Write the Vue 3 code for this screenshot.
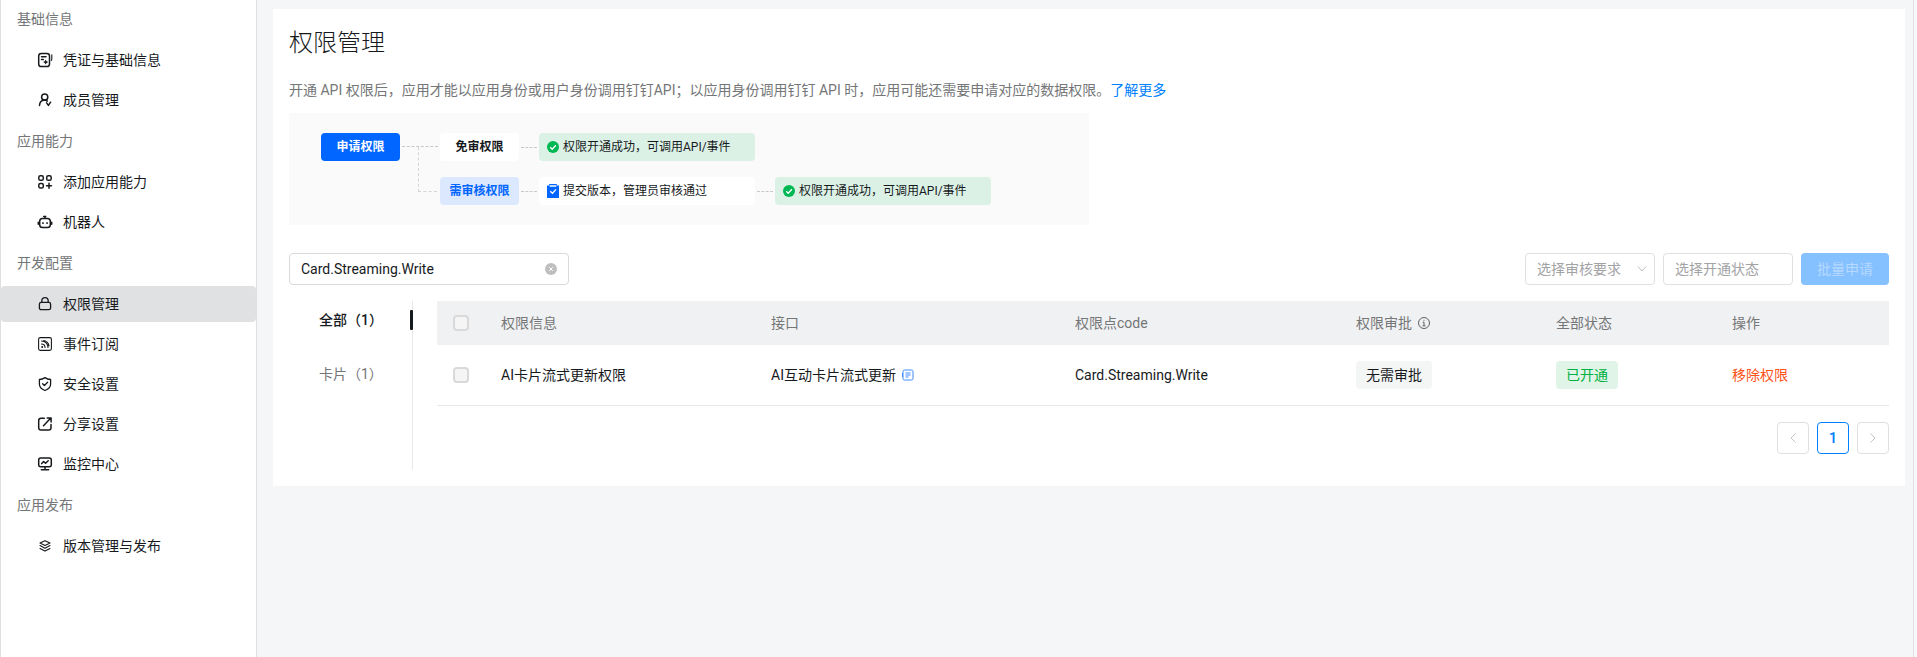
<script setup>
import { ref } from 'vue'

const groups = [
  {
    title: '基础信息',
    items: [
      { name: '凭证与基础信息', icon: 'credential' },
      { name: '成员管理', icon: 'member' }
    ]
  },
  {
    title: '应用能力',
    items: [
      { name: '添加应用能力', icon: 'apps' },
      { name: '机器人', icon: 'robot' }
    ]
  },
  {
    title: '开发配置',
    items: [
      { name: '权限管理', icon: 'lock' },
      { name: '事件订阅', icon: 'feed' },
      { name: '安全设置', icon: 'shield' },
      { name: '分享设置', icon: 'share' },
      { name: '监控中心', icon: 'monitor' }
    ]
  },
  {
    title: '应用发布',
    items: [{ name: '版本管理与发布', icon: 'layers' }]
  }
]

const current = ref('权限管理')
const keyword = ref('Card.Streaming.Write')
const tabs = ['全部（1）', '卡片（1）']
const activeTab = ref(tabs[0])
const rows = [
  { name: 'AI卡片流式更新权限', api: 'AI互动卡片流式更新', code: 'Card.Streaming.Write', approve: '无需审批', status: '已开通' }
]
</script>

<template>
  <div class="page">
    <nav class="sidebar" aria-label="应用菜单">
      <section v-for="group in groups" :key="group.title" class="group">
        <h2 class="group-title">{{ group.title }}</h2>
        <a
          v-for="item in group.items"
          :key="item.name"
          href="#"
          class="item"
          :class="{ active: item.name === current }"
          @click.prevent="current = item.name"
        >
          <svg class="icon" viewBox="0 0 16 16" aria-hidden="true">
            <g v-if="item.icon === 'credential'">
              <rect x="1.7" y="1.500" width="10.800" height="13" rx="2.600" />
              <path d="M4.500 4.800h4.500M4.500 7.500h1.800" />
              <path class="fine" d="M14.800 2.800v4c0 .7-.2 1.200-.5 1.700" />
              <path class="solid" d="M8.700 7.600l.9 1.700 1.700.800-1.700.800-.9 1.700-.9-1.700-1.700-.800 1.700-.800z" />
            </g>
            <g v-else-if="item.icon === 'member'">
              <circle cx="7.700" cy="5" r="3.100" />
              <path d="M2.500 13.500c.2-3 2-5.200 5-5.400 1.200 0 2 .3 2.800 1M9.600 10.900l1.800 2.500 2.200-3.200" />
            </g>
            <g v-else-if="item.icon === 'apps'">
              <rect x="1.800" y="1.800" width="4.500" height="4.500" rx="1.600" />
              <rect x="9.700" y="1.800" width="4.500" height="4.500" rx="1.600" />
              <rect x="1.800" y="9.500" width="4.500" height="4.500" rx="1.600" />
              <path d="M12 9.200v5M9.500 11.700h5" />
            </g>
            <g v-else-if="item.icon === 'robot'">
              <rect x="2.700" y="4.500" width="10.600" height="9" rx="2.800" />
              <path d="M1.300 8.200v2M14.700 8.200v2M8 4.300V2.300M6.700 2.600h2" />
              <path class="solid" d="M5.200 8.300h1.500v1.700H5.200zM9.300 8.300h1.500v1.700H9.300z" />
            </g>
            <g v-else-if="item.icon === 'lock'" class="medium">
              <rect x="2.400" y="6.400" width="11.200" height="7.300" rx="1.800" />
              <path d="M4.800 6.200V5c0-2 1.200-3.400 3.200-3.400s3.200 1.400 3.200 3.400v1.200" />
            </g>
            <g v-else-if="item.icon === 'feed'" class="thin">
              <rect x="1.600" y="1.600" width="12.800" height="12.800" rx="1.600" />
              <path d="M4.500 5c3.800 0 6.500 2.700 6.500 6.500M4.500 8c2 0 3.500 1.500 3.500 3.500M6.800 4.500c2.800.5 4.700 2.600 5.200 5.400" />
              <circle class="solid" cx="5.200" cy="11" r="1" />
            </g>
            <g v-else-if="item.icon === 'shield'" class="medium">
              <path d="M8 1.600c1.700 1.200 3.500 1.800 5.600 1.900v4.800c0 3-2.200 5-5.600 6.200-3.400-1.200-5.600-3.200-5.600-6.200V3.500C4.500 3.400 6.300 2.800 8 1.600z" />
              <path d="M5.600 7.700l1.800 1.800 3.200-3.200" />
            </g>
            <g v-else-if="item.icon === 'share'">
              <path d="M7.300 2.300H4C2.700 2.300 1.700 3.300 1.700 4.600v7.200c0 1.300 1 2.300 2.300 2.300h7.700c1.300 0 2.300-1 2.300-2.300V8.500M6.500 9.700l7.300-7.600M10.200 1.900h3.900v4" />
            </g>
            <g v-else-if="item.icon === 'monitor'">
              <rect x="1.700" y="2" width="12.600" height="8.800" rx="2" />
              <path d="M4.700 7.600l1.900-2 2 1.600 2.600-2.500M8 11v2.400M4.300 13.800h7.400" />
            </g>
            <g v-else class="thin">
              <path d="M8 2.700l5 2.300-5 2.500L3 5zM3 7.600l5 2.600 5-2.600M3 10.500l5 2.600 5-2.600" />
            </g>
          </svg>
          <span>{{ item.name }}</span>
        </a>
      </section>
    </nav>

    <main class="main">
      <section class="card">
        <h1 class="title">权限管理</h1>
        <p class="desc">
          开通 API 权限后，应用才能以应用身份或用户身份调用钉钉API；以应用身份调用钉钉 API 时，应用可能还需要申请对应的数据权限。<a href="#">了解更多</a>
        </p>

        <div class="flow">
          <span class="node primary">申请权限</span>
          <span class="link fork"></span>
          <div class="branches">
            <div class="branch">
              <span class="node plain">免审权限</span>
              <span class="link"></span>
              <span class="node wide success">
                <svg viewBox="0 0 12 12" aria-hidden="true"><circle cx="6" cy="6" r="6" fill="#00b853" /><path d="M3.200 6.200l2 2 3.700-3.900" /></svg>
                权限开通成功，可调用API/事件
              </span>
            </div>
            <div class="branch">
              <span class="node light">需审核权限</span>
              <span class="link"></span>
              <span class="node wide">
                <svg viewBox="0 0 12 14" class="clip" aria-hidden="true"><path class="board" d="M0 1.500h2.200V0h7.600v1.500H12V14H0z" /><path d="M2.700 2h6.600M3.300 7.300l2.200 2 3.500-3.900" /></svg>
                提交版本，管理员审核通过
              </span>
              <span class="link"></span>
              <span class="node wide success">
                <svg viewBox="0 0 12 12" aria-hidden="true"><circle cx="6" cy="6" r="6" fill="#00b853" /><path d="M3.200 6.200l2 2 3.700-3.900" /></svg>
                权限开通成功，可调用API/事件
              </span>
            </div>
          </div>
        </div>

        <div class="toolbar">
          <div class="search">
            <input v-model="keyword" type="text" aria-label="搜索权限" />
            <button type="button" class="clear" aria-label="清除" @click="keyword = ''">
              <svg viewBox="0 0 12 12" aria-hidden="true"><circle cx="6" cy="6" r="6" fill="#bfbfbf" /><path d="M4.200 4.200l3.600 3.600M7.800 4.200L4.200 7.800" stroke="#fff" /></svg>
            </button>
          </div>
          <div class="filters">
            <div class="select">
              <select aria-label="审核要求"><option>选择审核要求</option></select>
              <svg viewBox="0 0 10 6" aria-hidden="true"><path d="M1 .5l4 4.500 4-4.500" /></svg>
            </div>
            <div class="select">
              <select aria-label="开通状态"><option>选择开通状态</option></select>
            </div>
            <button type="button" class="apply" disabled>批量申请</button>
          </div>
        </div>

        <div class="content">
          <div class="tabs">
            <button
              v-for="tab in tabs"
              :key="tab"
              type="button"
              class="tab"
              :class="{ on: tab === activeTab }"
              @click="activeTab = tab"
            >{{ tab }}</button>
          </div>
          <div class="list">
            <table>
              <colgroup>
                <col class="c-check" /><col class="c-info" /><col class="c-api" /><col class="c-code" /><col class="c-approve" /><col class="c-status" /><col />
              </colgroup>
              <thead>
                <tr>
                  <th><input type="checkbox" disabled aria-label="全选" /></th>
                  <th>权限信息</th>
                  <th>接口</th>
                  <th>权限点code</th>
                  <th>
                    <span class="inline">权限审批
                      <svg class="info" viewBox="0 0 12 12" aria-hidden="true"><circle cx="6" cy="6" r="5.500" /><path d="M4.700 5.200H6v3.500M4.500 8.800h3M5.500 3.300h1" /></svg>
                    </span>
                  </th>
                  <th>全部状态</th>
                  <th>操作</th>
                </tr>
              </thead>
              <tbody>
                <tr v-for="row in rows" :key="row.code">
                  <td><input type="checkbox" disabled :aria-label="row.name" /></td>
                  <td>{{ row.name }}</td>
                  <td>
                    <span class="inline">{{ row.api }}
                      <svg class="doc" viewBox="0 0 12 12" aria-hidden="true"><rect x="1" y="1" width="10" height="10" rx="1.500" /><path d="M3.500 4h5M3.500 6h5M3.500 8h3M.5 4v4" /></svg>
                    </span>
                  </td>
                  <td>{{ row.code }}</td>
                  <td><span class="tag">{{ row.approve }}</span></td>
                  <td><span class="tag ok">{{ row.status }}</span></td>
                  <td><a href="#" class="remove">移除权限</a></td>
                </tr>
              </tbody>
            </table>
            <div class="pager">
              <button type="button" disabled aria-label="上一页"><svg viewBox="0 0 6 10" aria-hidden="true"><path d="M5.500.5L1 5l4.500 4.500" /></svg></button>
              <button type="button" class="num">1</button>
              <button type="button" disabled aria-label="下一页"><svg viewBox="0 0 6 10" aria-hidden="true"><path d="M.5.5L5 5 .5 9.500" /></svg></button>
            </div>
          </div>
        </div>
      </section>
    </main>
  </div>
</template>

<style>
body {
  background: #f8f9fb;
}
</style>

<style scoped>
.page {
  display: flex;
  box-sizing: border-box;
  min-height: 100vh;
  margin-right: 3px;
  border: solid #dfe0e2;
  border-width: 0 1px;
  background: #f4f6f8;
  color: #171a1d;
  font: 14px/22px Roboto, "Noto Sans CJK SC", sans-serif;
}
button,
input,
select {
  box-sizing: border-box;
  margin: 0;
  font: inherit;
}
a {
  color: inherit;
  text-decoration: none;
}
svg {
  flex: none;
  fill: none;
}
.sidebar {
  flex: none;
  box-sizing: border-box;
  width: 256px;
  border-right: 1px solid #dfe0e2;
  background: #fff;
}
.group {
  display: flex;
  flex-direction: column;
  gap: 4px;
  margin-bottom: 4px;
}
.group-title {
  margin: 0;
  padding: 0 16px;
  color: #747677;
  font-size: 14px;
  font-weight: 400;
  line-height: 38px;
}
.item {
  display: flex;
  align-items: center;
  gap: 10px;
  height: 36px;
  padding-left: 36px;
  border-radius: 4px;
}
.item.active {
  background: #e0e1e3;
}
.icon {
  width: 16px;
  height: 16px;
  stroke: #171a1d;
  stroke-width: 1.5;
  stroke-linecap: round;
  stroke-linejoin: round;
}
.icon .medium {
  stroke-width: 1.3;
}
.icon .thin,
.icon .fine {
  stroke-width: 1.1;
}
.icon .solid {
  fill: #171a1d;
  stroke: none;
}
.main {
  flex: 1;
  min-width: 0;
  padding: 9px 8px 9px 16px;
}
.card {
  padding: 16px;
  background: #fff;
}
.title {
  margin: 0;
  font-size: 24px;
  font-weight: 300;
  line-height: 36px;
}
.desc {
  margin: 18px 0 12px;
  color: #747677;
}
.desc a {
  color: #007fff;
}
.flow {
  display: flex;
  align-items: flex-start;
  box-sizing: border-box;
  max-width: 800px;
  padding: 20px 32px;
  background: #fafafa;
  font-size: 12px;
}
.branches {
  display: flex;
  flex-direction: column;
  gap: 16px;
}
.branch {
  display: flex;
  align-items: center;
}
.node {
  display: flex;
  align-items: center;
  justify-content: center;
  gap: 4px;
  box-sizing: border-box;
  width: 79px;
  height: 28px;
  border-radius: 4px;
  background: #fff;
  font-weight: 700;
}
.node.primary {
  background: #0066ff;
  color: #fff;
}
.node.light {
  background: #dce8fd;
  color: #0066ff;
}
.node.wide {
  justify-content: flex-start;
  width: 216px;
  padding-left: 8px;
  font-weight: 400;
}
.node.success {
  background: #dcf1e6;
}
.node svg {
  width: 12px;
  height: 12px;
  stroke: #fff;
  stroke-width: 1.3;
}
.node circle {
  stroke: none;
}
.node .clip {
  height: 14px;
}
.node .board {
  fill: #0066ff;
  stroke: none;
}
.link {
  width: 16px;
  margin: 0 2px;
  border-top: 1px dashed #c8c9ca;
}
.link.fork {
  position: relative;
  width: 36px;
  margin-top: 13px;
}
.link.fork::after {
  content: "";
  position: absolute;
  top: 0;
  left: 16px;
  width: 18px;
  height: 44px;
  border: dashed #d4d5d6;
  border-width: 0 0 1px 1px;
}
.toolbar {
  display: flex;
  justify-content: space-between;
  margin: 28px 0 16px;
}
.search {
  display: flex;
  align-items: center;
  box-sizing: border-box;
  width: 280px;
  height: 32px;
  padding: 0 11px;
  border: 1px solid #d9dadb;
  border-radius: 4px;
}
.search input {
  flex: 1;
  min-width: 0;
  padding: 0;
  border: 0;
  outline: 0;
  background: none;
  color: #171a1d;
}
.clear {
  display: flex;
  padding: 0;
  border: 0;
  background: none;
}
.clear svg {
  width: 12px;
  height: 12px;
}
.filters {
  display: flex;
  gap: 8px;
}
.select {
  display: flex;
  align-items: center;
  box-sizing: border-box;
  width: 130px;
  height: 32px;
  padding: 0 7px 0 11px;
  border: 1px solid #dfe0e1;
  border-radius: 4px;
}
.select select {
  flex: 1;
  min-width: 0;
  padding: 0;
  border: 0;
  outline: 0;
  appearance: none;
  background: none;
  color: #a2a3a5;
}
.select svg {
  width: 10px;
  height: 6px;
  stroke: #bcbdbe;
}
.apply {
  width: 88px;
  height: 32px;
  padding: 0;
  border: 0;
  border-radius: 4px;
  background: #85c0ff;
  color: #b6d9ff;
}
.content {
  display: flex;
  gap: 24px;
}
.tabs {
  flex: none;
  display: flex;
  flex-direction: column;
  gap: 16px;
  box-sizing: border-box;
  width: 124px;
  border-right: 1px solid #e8e8e9;
}
.tab {
  position: relative;
  height: 38px;
  padding: 0 0 0 30px;
  border: 0;
  background: none;
  color: #747677;
  text-align: left;
}
.tab.on {
  color: #171a1d;
  font-weight: 500;
}
.tab.on::after {
  content: "";
  position: absolute;
  top: 9px;
  right: -1px;
  width: 3px;
  height: 20px;
  border-radius: 1px;
  background: #171a1d;
}
.list {
  flex: 1;
  min-width: 0;
}
table {
  width: 100%;
  border-collapse: collapse;
  table-layout: fixed;
}
.c-check {
  width: 48px;
}
.c-info {
  width: 270px;
}
.c-api {
  width: 304px;
}
.c-code {
  width: 281px;
}
.c-approve {
  width: 200px;
}
.c-status {
  width: 176px;
}
th,
td {
  padding: 0 16px;
  text-align: left;
  vertical-align: middle;
}
th {
  height: 44px;
  background: #f0f1f3;
  color: #747677;
  font-weight: 400;
}
td {
  height: 60px;
  border-bottom: 1px solid #e8e8e9;
}
input[type="checkbox"] {
  display: block;
  width: 16px;
  height: 16px;
  border: 2px solid #d9d9d9;
  border-radius: 4px;
  appearance: none;
  background: #f5f5f5;
}
.inline {
  display: flex;
  align-items: center;
  gap: 6px;
}
.info {
  width: 12px;
  height: 12px;
  stroke: #5e6062;
}
.doc {
  width: 12px;
  height: 12px;
  stroke: #3d8bff;
}
.tag {
  display: inline-block;
  padding: 0 10px;
  border-radius: 4px;
  background: #f4f6f6;
  line-height: 28px;
}
.tag.ok {
  background: #e0f4e8;
  color: #00b042;
}
.remove {
  color: #ff5219;
}
.pager {
  display: flex;
  justify-content: flex-end;
  gap: 8px;
  padding: 16px 0;
}
.pager button {
  display: flex;
  align-items: center;
  justify-content: center;
  width: 32px;
  height: 32px;
  padding: 0;
  border: 1px solid #dfe0e1;
  border-radius: 4px;
  background: #fff;
}
.pager .num {
  border-color: #007fff;
  color: #007fff;
  font-weight: 600;
}
.pager svg {
  width: 6px;
  height: 10px;
  stroke: #c4c5c6;
}
</style>
